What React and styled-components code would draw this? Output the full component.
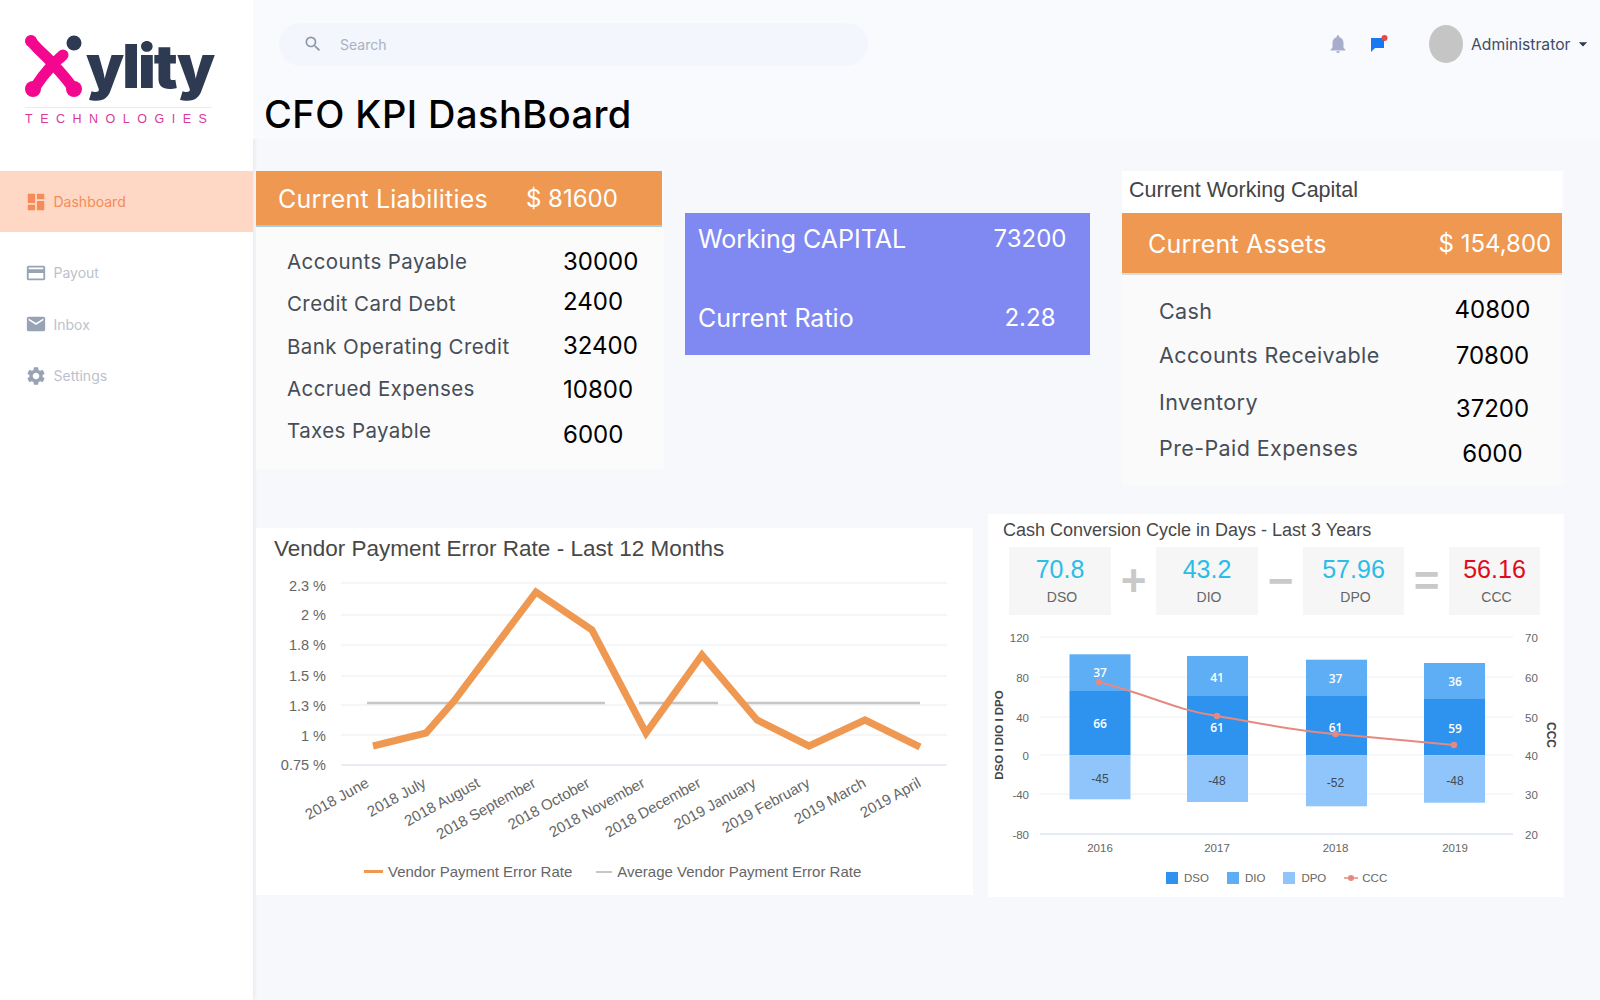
import React from 'react';
import styled, { createGlobalStyle } from 'styled-components';
import { MdDashboard, MdOutlineCreditCard, MdEmail, MdSettings, MdNotifications, MdSearch, MdArrowDropDown } from 'react-icons/md';

const GlobalStyle = createGlobalStyle`
  html, body {
    margin: 0;
    padding: 0;
    background: #f6f8fc;
    font-family: Inter, "Open Sans", sans-serif;
    overflow: hidden;
  }
`;

const Page = styled.div`
  display: flex;
  width: 1600px;
  height: 1000px;
`;

const Sidebar = styled.aside`
  width: 253px;
  flex: none;
  background: #fff;
  box-shadow: 1px 0 4px rgba(90, 100, 130, 0.12);
`;

const LogoBlock = styled.div`
  height: 171px;
  box-sizing: border-box;
  padding: 35px 0 0 25px;
`;

const LogoTop = styled.div`
  display: flex;
  align-items: flex-start;
  height: 72px;
`;

const LogoWord = styled.span`
  font-family: Inter, sans-serif;
  font-weight: 900;
  font-size: 60px;
  line-height: 60px;
  letter-spacing: -2px;
  color: #2d3a52;
  margin: 1px 0 0 3px;
`;

const LogoSub = styled.div`
  width: 187px;
  border-top: 1px solid #f8e3ee;
  padding-top: 4px;
  font-family: "Liberation Sans", sans-serif;
  font-size: 12.5px;
  line-height: 15px;
  letter-spacing: 7.5px;
  white-space: nowrap;
  color: #d9399b;
`;

const NavItem = styled.div`
  display: flex;
  align-items: center;
  gap: 7px;
  height: ${(p) => (p.$active ? '61px' : '51.5px')};
  margin-bottom: ${(p) => (p.$active ? '15px' : '0')};
  padding-left: 24.5px;
  background: ${(p) => (p.$active ? '#fed8c5' : 'transparent')};
  color: ${(p) => (p.$active ? '#f58b58' : '#bcc2cd')};
  font-size: 14px;
  svg {
    color: ${(p) => (p.$active ? '#f58b58' : '#98a3b6')};
    flex: none;
  }
`;

const Main = styled.main`
  flex: 1;
  min-width: 0;
`;

const TopArea = styled.div`
  height: 139px;
  background: #f9fafe;
`;

const TopBar = styled.header`
  display: flex;
  align-items: center;
  height: 88px;
  padding-left: 26px;
`;

const SearchBox = styled.div`
  display: flex;
  align-items: center;
  gap: 17px;
  width: 589px;
  height: 43px;
  box-sizing: border-box;
  padding-left: 24px;
  border-radius: 22px;
  background: #f3f6fc;
  color: #a9b1c0;
  font-size: 14px;
  svg {
    color: #8d97a8;
  }
`;

const Bell = styled(MdNotifications)`
  margin-left: 459px;
  color: #a8adcb;
`;

const ChatIcon = styled.svg`
  margin-left: 20px;
`;

const Avatar = styled.div`
  width: 34px;
  height: 38px;
  margin-left: 40px;
  border-radius: 50%;
  background: #c5c5c5;
`;

const UserName = styled.span`
  margin-left: 8px;
  font-size: 15.7px;
  color: #414c62;
`;

const Caret = styled(MdArrowDropDown)`
  margin-left: 3px;
  color: #2f3a50;
`;

const Title = styled.h1`
  margin: 0 0 0 11px;
  font-size: 38px;
  letter-spacing: 0.45px;
  line-height: 52px;
  font-weight: 500;
  color: #000;
`;

const Content = styled.div`
  padding: 32px 0 0 3px;
`;

const TopRow = styled.div`
  display: flex;
  align-items: flex-start;
  height: 343px;
`;

const BottomRow = styled.div`
  display: flex;
  align-items: flex-start;
  gap: 15px;
`;

const LiabilityCard = styled.section`
  width: 408px;
  height: 298px;
  background: #fbfbfc;
`;

const OrangeHead = styled.div`
  display: flex;
  align-items: center;
  height: ${(p) => p.$h}px;
  margin-right: 2px;
  box-sizing: border-box;
  padding: 1px 0 0 ${(p) => p.$pad}px;
  background: #ee9852;
  color: #fff;
  font-size: 25px;
  letter-spacing: 0.2px;
  border-bottom: 2px solid ${(p) => p.$line};
`;

const HeadValue = styled.span`
  margin-left: ${(p) => p.$gap}px;
  font-size: 24px;
  letter-spacing: 0;
`;

const RowList = styled.div`
  padding: ${(p) => p.$top}px 0 0 ${(p) => p.$left}px;
`;

const KpiRow = styled.div`
  display: grid;
  grid-template-columns: ${(p) => p.$label}px ${(p) => p.$value}px;
  height: ${(p) => p.$h}px;
`;

const KpiLabel = styled.span`
  margin-top: ${(p) => p.$dy || 0}px;
  font-size: ${(p) => p.$size}px;
  letter-spacing: 0.4px;
  line-height: 28px;
  white-space: nowrap;
  color: #474d57;
`;

const KpiValue = styled.span`
  margin-top: ${(p) => p.$dy || 0}px;
  font-size: 24px;
  line-height: 28px;
  color: #000;
  text-align: ${(p) => p.$align || 'left'};
`;

const PurpleCard = styled.section`
  width: 405px;
  height: 142px;
  margin: 42px 32px 0 21px;
  box-sizing: border-box;
  padding: 11px 0 0 13px;
  background: #8089f2;
  color: #fff;
  font-size: 25px;
`;

const PurpleRow = styled.div`
  display: grid;
  grid-template-columns: 285px 94px;
  height: 30px;
  line-height: 30px;
  margin-bottom: 49px;
`;

const PurpleValue = styled.span`
  text-align: center;
  font-size: 24px;
`;

const CapitalCard = styled.section`
  width: 442px;
  height: 315px;
  background: #fafafb;
`;

const CapitalTitle = styled.div`
  height: 42px;
  box-sizing: border-box;
  padding: 4px 0 0 7px;
  margin-right: 2px;
  background: #fff;
  font-family: "Liberation Sans", sans-serif;
  font-size: 21.5px;
  line-height: 30px;
  color: #444;
`;

const ChartCard = styled.section`
  background: #fff;
  box-sizing: border-box;
  width: ${(p) => p.$w}px;
  height: ${(p) => p.$h}px;
  margin-top: ${(p) => p.$top || 0}px;
  font-family: "Liberation Sans", sans-serif;
`;

const ChartTitle = styled.div`
  height: ${(p) => p.$h}px;
  padding-left: ${(p) => p.$left}px;
  font-size: ${(p) => p.$size}px;
  line-height: ${(p) => p.$h}px;
  color: #484848;
`;

const ChartSvg = styled.svg`
  display: block;
  font-family: "Liberation Sans", sans-serif;
`;

const Legend = styled.div`
  display: flex;
  align-items: center;
  margin-top: ${(p) => p.$top}px;
  padding-left: ${(p) => p.$left}px;
  gap: ${(p) => p.$gap}px;
  font-size: ${(p) => p.$size}px;
  color: #666;
`;

const LegendItem = styled.span`
  display: flex;
  align-items: center;
  gap: ${(p) => p.$gap}px;
`;

const LineKey = styled.i`
  width: ${(p) => p.$w}px;
  height: ${(p) => p.$t}px;
  background: ${(p) => p.$color};
`;

const SwatchKey = styled.i`
  width: 12px;
  height: 12px;
  background: ${(p) => p.$color};
`;

const FormulaRow = styled.div`
  display: flex;
  padding: 0 0 7px 21px;
`;

const FormulaBox = styled.div`
  width: ${(p) => p.$w}px;
  height: 68px;
  background: #f6f6f6;
  text-align: center;
`;

const FormulaValue = styled.div`
  padding-top: 8px;
  font-size: 25px;
  line-height: 29px;
  color: ${(p) => p.$color};
`;

const FormulaName = styled.div`
  padding: 5px 0 0 4px;
  font-size: 14px;
  line-height: 16px;
  color: #666;
`;

const FormulaOp = styled.div`
  width: 45px;
  height: 68px;
  line-height: 68px;
  text-align: center;
  font-size: 44px;
  font-weight: 700;
  color: #c9c9c9;
`;

const liabilities = [
  { label: 'Accounts Payable', value: '30000', dy: 0 },
  { label: 'Credit Card Debt', value: '2400', dy: -2 },
  { label: 'Bank Operating Credit', value: '32400', dy: -1 },
  { label: 'Accrued Expenses', value: '10800', dy: 1 },
  { label: 'Taxes Payable', value: '6000', dy: 4 },
];

const assets = [
  { label: 'Cash', value: '40800', ly: 2, vy: 1 },
  { label: 'Accounts Receivable', value: '70800', ly: 0, vy: 1 },
  { label: 'Inventory', value: '37200', ly: 1, vy: 8 },
  { label: 'Pre-Paid Expenses', value: '6000', ly: 1, vy: 7 },
];

const errorRate = [
  [373, 746], [426, 733], [454, 701], [536, 592], [592, 630], [646, 733],
  [702, 655], [757, 720], [809, 746], [865, 720], [920, 747],
];
const errorTicks = [
  ['2.3 %', 583, 3], ['2 %', 615, 0], ['1.8 %', 645, 0], ['1.5 %', 676, 0], ['1.3 %', 705, 1], ['1 %', 735, 1], ['0.75 %', 765, 0],
];
const months = [
  ['2018 June', 370], ['2018 July', 427], ['2018 August', 481], ['2018 September', 537], ['2018 October', 591],
  ['2018 November', 646], ['2018 December', 702], ['2019 January', 757], ['2019 February', 811], ['2019 March', 867], ['2019 April', 922],
];

const bars = [
  { year: '2016', x: 1069.5, top: 654.3, mid: 690.3, bottom: 799.3, dio: ['37', 677], dso: ['66', 728], dpo: ['-45', 783], tx: 1100 },
  { year: '2017', x: 1187, top: 656, mid: 696, bottom: 802, dio: ['41', 682], dso: ['61', 732], dpo: ['-48', 785], tx: 1217 },
  { year: '2018', x: 1306, top: 659.7, mid: 696, bottom: 806.3, dio: ['37', 683], dso: ['61', 732], dpo: ['-52', 787], tx: 1335.5 },
  { year: '2019', x: 1424, top: 663, mid: 698.3, bottom: 802.7, dio: ['36', 686], dso: ['59', 733], dpo: ['-48', 785], tx: 1455 },
];
const cycleTicks = [['120', '70', 637], ['80', '60', 677], ['40', '50', 717], ['0', '40', 755], ['-40', '30', 794], ['-80', '20', 834]];

const ErrorRateChart = () => (
  <ChartSvg width="717" height="280" viewBox="256 570 717 280">
    {errorTicks.map(([label, y, dy]) => (
      <g key={label}>
        <line x1="341" x2="947" y1={y} y2={y} stroke={y === 765 ? '#e3e7f0' : '#f2f3f6'} strokeWidth="1.5" />
        <text x="326" y={y + 5 + dy} textAnchor="end" fontSize="14.5" fill="#666">{label}</text>
      </g>
    ))}
    <path d="M367 703H605M639 703H718M746 703H920" stroke="#c6c6c6" strokeWidth="2.5" fill="none" />
    <polyline
      points={errorRate.map((p) => p.join(',')).join(' ')}
      fill="none"
      stroke="#ee9852"
      strokeWidth="7"
      strokeLinejoin="miter"
    />
    {months.map(([label, x]) => (
      <text key={label} x={x} y={786} textAnchor="end" fontSize="15" fill="#666" transform={`rotate(-29 ${x} 786)`}>
        {label}
      </text>
    ))}
  </ChartSvg>
);

const CycleChart = () => (
  <ChartSvg width="576" height="240" viewBox="988 622 576 240">
    {cycleTicks.map(([left, right, y]) => (
      <g key={left}>
        <line x1="1040" x2="1513" y1={y} y2={y} stroke={y === 834 ? '#dde4f0' : '#f3f4f6'} strokeWidth="1.5" />
        <text x="1029" y={y + 5} textAnchor="end" fontSize="11.5" fill="#666">{left}</text>
        <text x="1525" y={y + 5} fontSize="11.5" fill="#666">{right}</text>
      </g>
    ))}
    {bars.map((b) => (
      <g key={b.year} textAnchor="middle" fontSize="12">
        <rect x={b.x} y={b.top} width="61" height={b.mid - b.top} fill="#5eaef5" />
        <rect x={b.x} y={b.mid} width="61" height={755.3 - b.mid} fill="#2e93ef" />
        <rect x={b.x} y="755.3" width="61" height={b.bottom - 755.3} fill="#90c5fb" />
        <text x={b.tx} y={b.dio[1]} fill="#fff" fontFamily="Open Sans" fontWeight="600">{b.dio[0]}</text>
        <text x={b.tx} y={b.dso[1]} fill="#fff" fontFamily="Open Sans" fontWeight="600">{b.dso[0]}</text>
        <text x={b.tx} y={b.dpo[1]} fill="#3f4a55">{b.dpo[0]}</text>
        <text x={b.tx} y="852" fontSize="11.5" fill="#666">{b.year}</text>
      </g>
    ))}
    <path d="M1099 682C1150 695 1175 710 1217 716C1260 723 1295 731 1335.5 734C1380 738 1420 742 1454 745" fill="none" stroke="#e58a80" strokeWidth="2" />
    {[[1099, 682], [1217, 716], [1335.5, 734], [1454, 745]].map(([x, y]) => (
      <circle key={x} cx={x} cy={y} r="3.2" fill="#e58a80" />
    ))}
    <text transform="rotate(-90 1003 735)" x="1003" y="735" textAnchor="middle" fontSize="11.5" fontWeight="700" fill="#444">DSO I DIO I DPO</text>
    <text transform="rotate(90 1547 735)" x="1547" y="735" textAnchor="middle" fontSize="12" fontWeight="700" fill="#444">CCC</text>
  </ChartSvg>
);

const App = () => (
  <Page>
    <GlobalStyle />
    <Sidebar>
      <LogoBlock>
        <LogoTop>
          <svg width="58" height="62" viewBox="0 0 58 62">
            <path d="M6 6C12 14 20 20 28 29C20 38 14 46 8 55M49 55C44 46 36 38 28 29C31 26 34 24 38 20" fill="none" stroke="#f4078f" strokeWidth="11" strokeLinecap="round" />
            <circle cx="6" cy="6" r="6" fill="#f4078f" />
            <circle cx="8" cy="54" r="8" fill="#f4078f" />
            <circle cx="49" cy="54" r="8" fill="#f4078f" />
            <circle cx="49" cy="8" r="7.5" fill="#2d3a52" />
          </svg>
          <LogoWord>ylity</LogoWord>
        </LogoTop>
        <LogoSub>TECHNOLOGIES</LogoSub>
      </LogoBlock>
      <nav>
        <NavItem $active><MdDashboard size={22} />Dashboard</NavItem>
        <NavItem><MdOutlineCreditCard size={22} />Payout</NavItem>
        <NavItem><MdEmail size={22} />Inbox</NavItem>
        <NavItem><MdSettings size={22} />Settings</NavItem>
      </nav>
    </Sidebar>
    <Main>
      <TopArea>
        <TopBar>
          <SearchBox><MdSearch size={20} />Search</SearchBox>
          <Bell size={22} />
          <ChatIcon width="20" height="20" viewBox="0 0 20 20">
            <path d="M2 4H15V14H6L2 18Z" fill="#1877f2" />
            <circle cx="15.5" cy="4" r="3" fill="#e8483f" />
          </ChatIcon>
          <Avatar />
          <UserName>Administrator</UserName>
          <Caret size={20} />
        </TopBar>
        <Title>CFO KPI DashBoard</Title>
      </TopArea>
      <Content>
        <TopRow>
          <LiabilityCard>
            <OrangeHead $h={56} $pad={22} $line="#a9cbe4">
              Current Liabilities
              <HeadValue $gap={38}>$ 81600</HeadValue>
            </OrangeHead>
            <RowList $top={21} $left={31}>
              {liabilities.map((r) => (
                <KpiRow key={r.label} $label={276} $value={90} $h={42.3}>
                  <KpiLabel $size={20.5}>{r.label}</KpiLabel>
                  <KpiValue $dy={r.dy}>{r.value}</KpiValue>
                </KpiRow>
              ))}
            </RowList>
          </LiabilityCard>
          <PurpleCard>
            <PurpleRow>
              <span>Working CAPITAL</span>
              <PurpleValue>73200</PurpleValue>
            </PurpleRow>
            <PurpleRow>
              <span>Current Ratio</span>
              <PurpleValue>2.28</PurpleValue>
            </PurpleRow>
          </PurpleCard>
          <CapitalCard>
            <CapitalTitle>Current Working Capital</CapitalTitle>
            <OrangeHead $h={62} $pad={26} $line="#dcdcdc">
              Current Assets
              <HeadValue $gap={112}>$ 154,800</HeadValue>
            </OrangeHead>
            <RowList $top={20} $left={37}>
              {assets.map((r) => (
                <KpiRow key={r.label} $label={286} $value={95} $h={46}>
                  <KpiLabel $size={21.5} $dy={r.ly}>{r.label}</KpiLabel>
                  <KpiValue $dy={r.vy} $align="center">{r.value}</KpiValue>
                </KpiRow>
              ))}
            </RowList>
          </CapitalCard>
        </TopRow>
        <BottomRow>
          <ChartCard $w={717} $h={367} $top={14}>
            <ChartTitle $h={42} $left={18} $size={22.5}>Vendor Payment Error Rate - Last 12 Months</ChartTitle>
            <ErrorRateChart />
            <Legend $top={13} $left={108} $gap={24} $size={15}>
              <LegendItem $gap={5}><LineKey $w={19} $t={3} $color="#ee9852" />Vendor Payment Error Rate</LegendItem>
              <LegendItem $gap={5}><LineKey $w={16} $t={2} $color="#c6c6c6" />Average Vendor Payment Error Rate</LegendItem>
            </Legend>
          </ChartCard>
          <ChartCard $w={576} $h={383}>
            <ChartTitle $h={33} $left={15} $size={18}>Cash Conversion Cycle in Days - Last 3 Years</ChartTitle>
            <FormulaRow>
              <FormulaBox $w={102}><FormulaValue $color="#2bbce8">70.8</FormulaValue><FormulaName>DSO</FormulaName></FormulaBox>
              <FormulaOp>+</FormulaOp>
              <FormulaBox $w={102}><FormulaValue $color="#2bbce8">43.2</FormulaValue><FormulaName>DIO</FormulaName></FormulaBox>
              <FormulaOp>−</FormulaOp>
              <FormulaBox $w={101}><FormulaValue $color="#2bbce8">57.96</FormulaValue><FormulaName>DPO</FormulaName></FormulaBox>
              <FormulaOp>=</FormulaOp>
              <FormulaBox $w={91}><FormulaValue $color="#e00b1c">56.16</FormulaValue><FormulaName>CCC</FormulaName></FormulaBox>
            </FormulaRow>
            <CycleChart />
            <Legend $top={10} $left={178} $gap={18} $size={11.5}>
              <LegendItem $gap={6}><SwatchKey $color="#2e93ef" />DSO</LegendItem>
              <LegendItem $gap={6}><SwatchKey $color="#5eaef5" />DIO</LegendItem>
              <LegendItem $gap={6}><SwatchKey $color="#90c5fb" />DPO</LegendItem>
              <LegendItem $gap={4}>
                <svg width="14" height="8" viewBox="0 0 14 8"><path d="M0 4H14" stroke="#e58a80" strokeWidth="1.5" /><circle cx="7" cy="4" r="3" fill="#e58a80" /></svg>
                CCC
              </LegendItem>
            </Legend>
          </ChartCard>
        </BottomRow>
      </Content>
    </Main>
  </Page>
);

export default App;
